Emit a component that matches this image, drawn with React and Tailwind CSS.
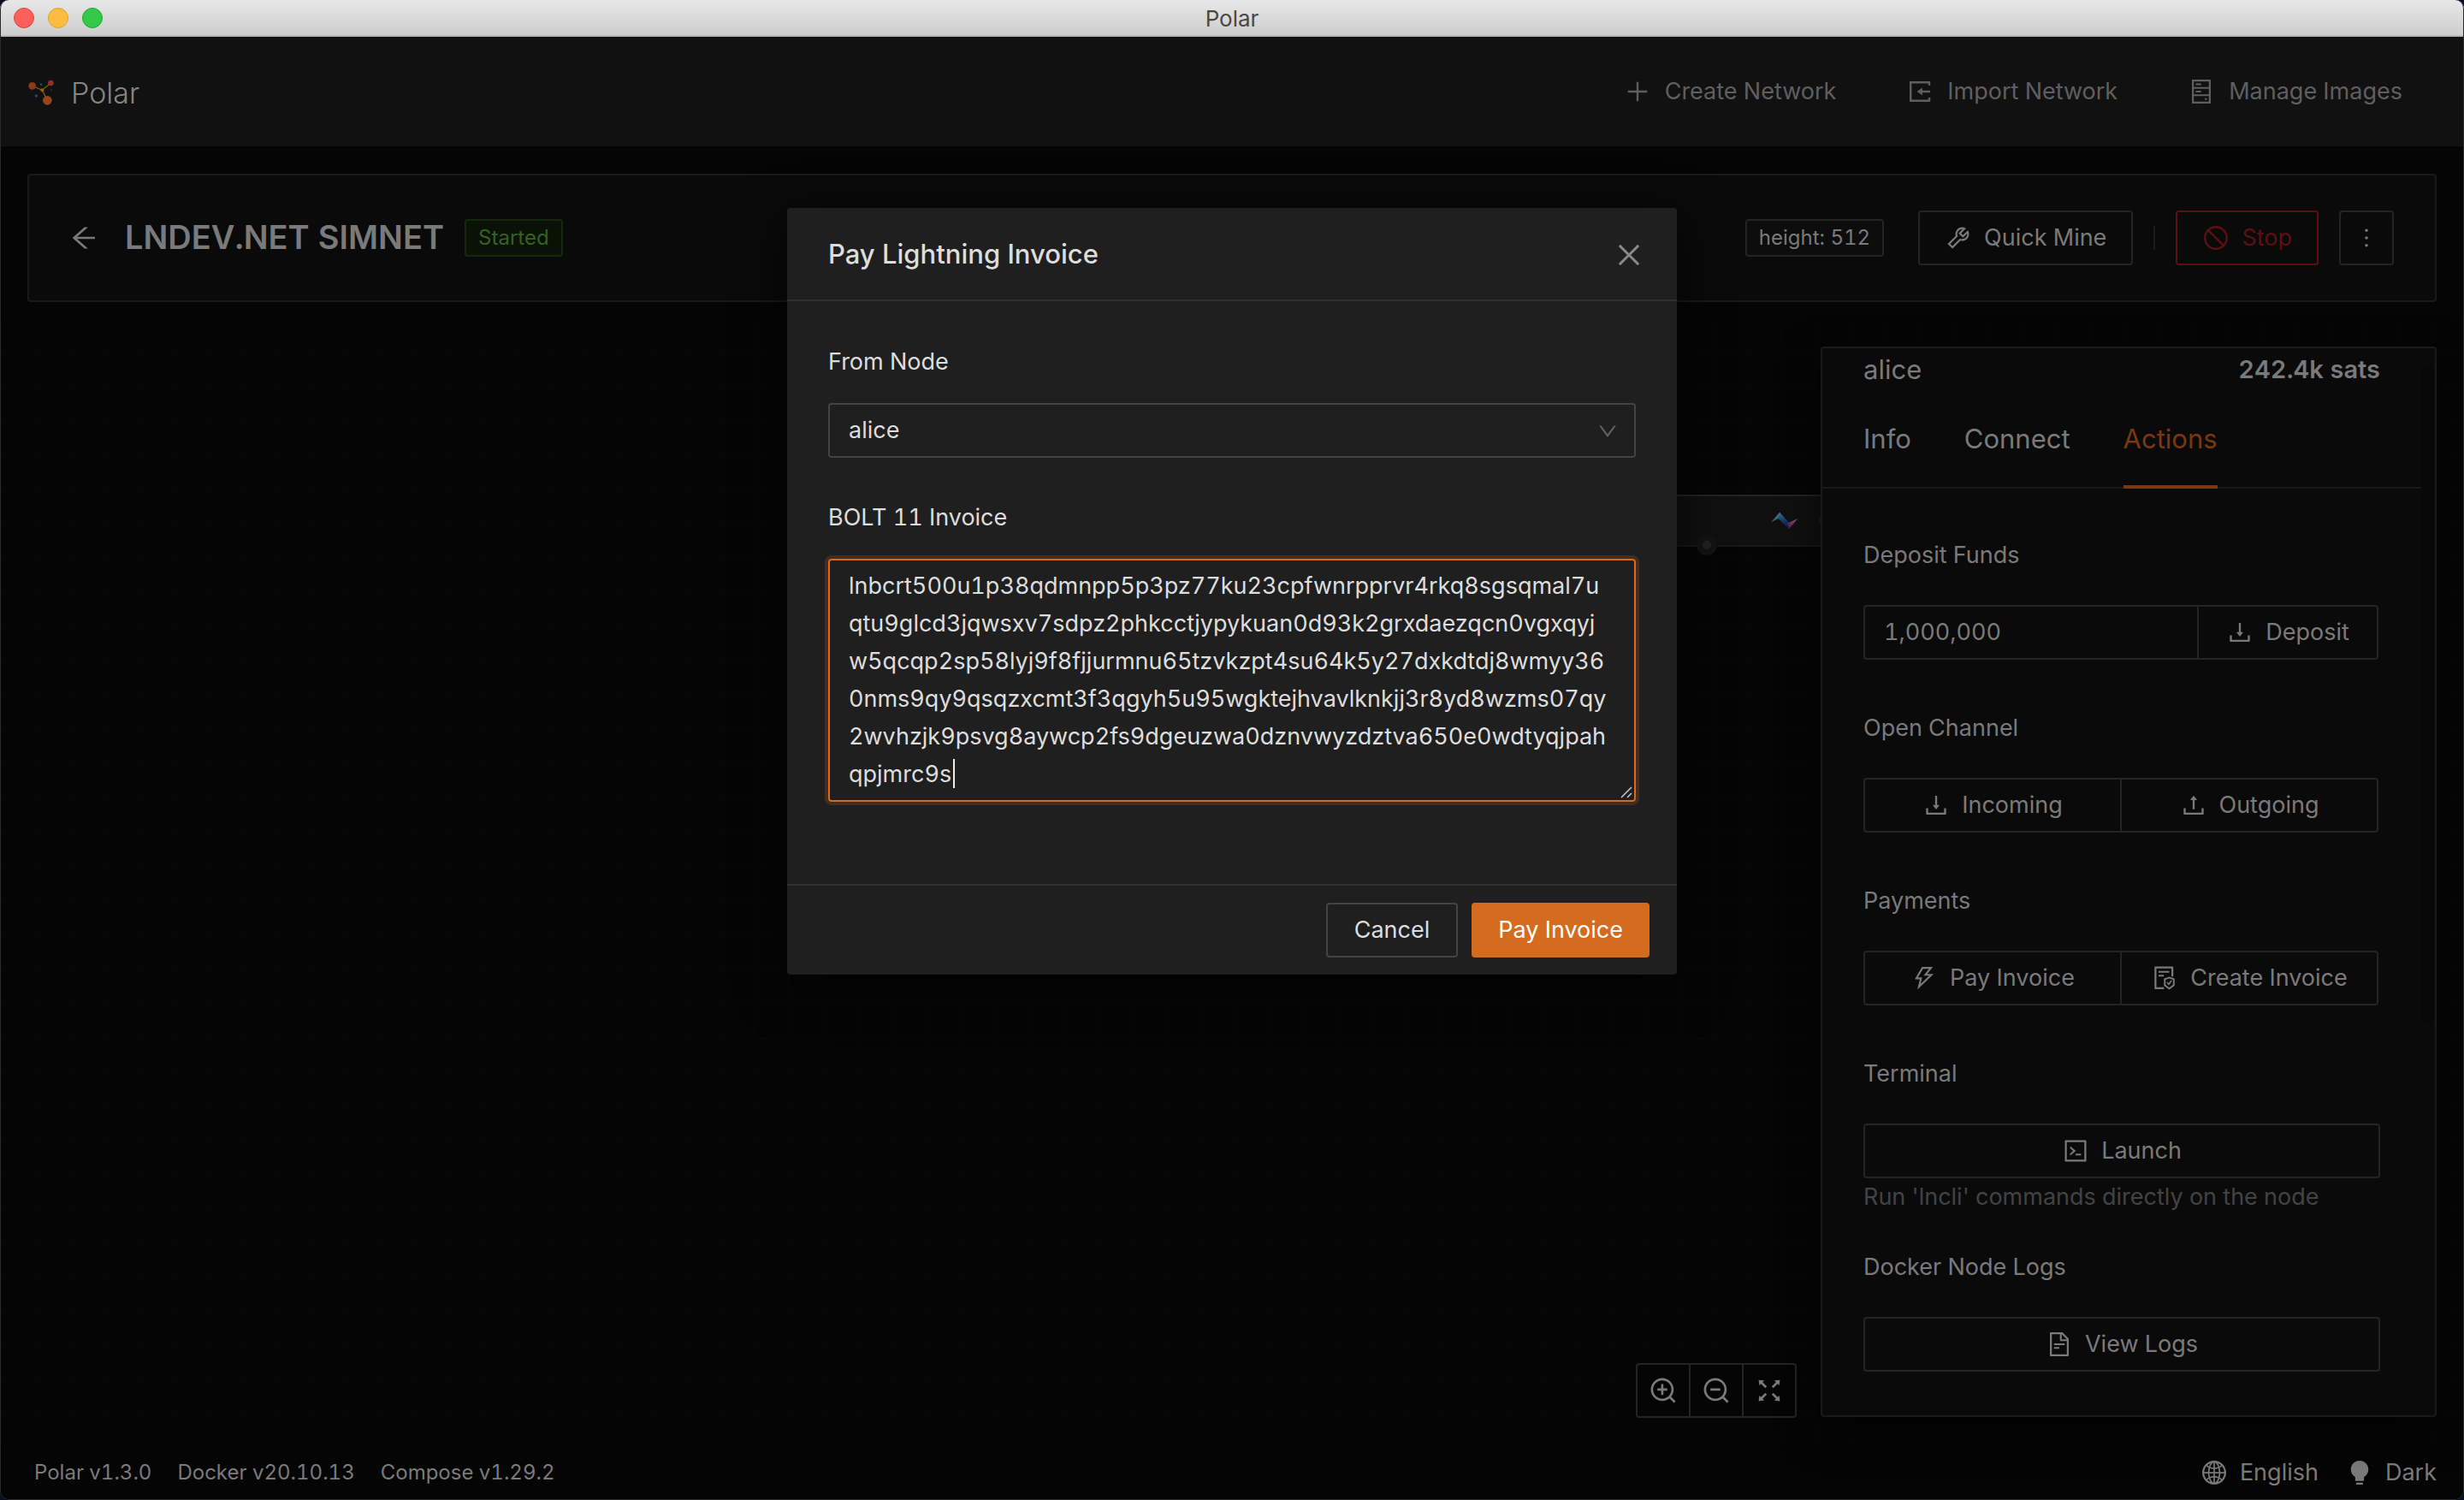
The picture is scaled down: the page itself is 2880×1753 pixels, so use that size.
import {
  AiOutlinePlus, AiOutlineHdd, AiOutlineTool, AiOutlineStop, AiOutlineMore,
  AiOutlineArrowLeft, AiOutlineClose, AiOutlineDown, AiOutlineDownload, AiOutlineUpload,
  AiOutlineThunderbolt, AiOutlineFileProtect, AiOutlineCode, AiOutlineFileText,
  AiOutlineZoomIn, AiOutlineZoomOut, AiOutlineFullscreen, AiOutlineGlobal, AiFillBulb,
} from "react-icons/ai";

const INVOICE = [
  "lnbcrt500u1p38qdmnpp5p3pz77ku23cpfwnrpprvr4rkq8sgsqmal7u",
  "qtu9glcd3jqwsxv7sdpz2phkcctjypykuan0d93k2grxdaezqcn0vgxqyj",
  "w5qcqp2sp58lyj9f8fjjurmnu65tzvkzpt4su64k5y27dxkdtdj8wmyy36",
  "0nms9qy9qsqzxcmt3f3qgyh5u95wgktejhvavlknkjj3r8yd8wzms07qy",
  "2wvhzjk9psvg8aywcp2fs9dgeuzwa0dznvwyzdztva650e0wdtyqjpah",
  "qpjmrc9s",
].join("\n");

const box = "flex h-16 items-center justify-center gap-3.5 rounded border-2 border-[#242424]";

function TitleBar() {
  return (
    <div className="relative flex h-[43px] items-center justify-center border-b-2 border-[#b4b6b4] bg-linear-to-b from-[#e8e8e8] to-[#cdcdcd]">
      <div className="absolute left-4 flex gap-4">
        <span className="size-6 rounded-full border border-[#e0443e] bg-[#fc605c]" />
        <span className="size-6 rounded-full border border-[#dea123] bg-[#fdbc40]" />
        <span className="size-6 rounded-full border border-[#1aab29] bg-[#34c84a]" />
      </div>
      <span className="pt-0.5 text-[26px] text-[#484848]">Polar</span>
    </div>
  );
}

function Logo() {
  return (
    <svg viewBox="98 74 90 90" className="size-[30px]" aria-hidden="true">
      <path d="M112 96 147 111 177 86M147 111 165 147" stroke="#7d5a12" strokeWidth="4" fill="none" />
      <circle cx="147" cy="111" r="6" fill="#8a6a14" />
      <circle cx="112" cy="96" r="13" fill="#8c3a1e" />
      <circle cx="177" cy="86" r="10" fill="#8c3320" />
      <circle cx="165" cy="147" r="16" fill="#96451c" />
      <circle cx="126" cy="131" r="5.500" fill="#1f4478" />
      <circle cx="143" cy="91" r="4" fill="#1f4478" />
      <circle cx="178" cy="111" r="3" fill="#1b3560" />
    </svg>
  );
}

function ImportIcon({ className }) {
  return (
    <svg viewBox="0 0 32 32" className={className} fill="none" stroke="currentColor" strokeWidth="2.400" aria-hidden="true">
      <path d="M27 9V5.200H5.200V26.800H27V23M28 16H17" />
      <path d="M19 11.500V20.500L12.500 16Z" fill="currentColor" stroke="none" />
    </svg>
  );
}

function NavItem({ icon: Icon, children }) {
  return (
    <button className="flex items-center gap-4 text-[27px]">
      <Icon className="size-8" />
      {children}
    </button>
  );
}

function Header() {
  return (
    <header className="flex h-32 items-center justify-between bg-[#111111] pl-[33px] pr-[72px] text-[#5f5f5f]">
      <a href="#home" className="flex items-center gap-5 pt-0.5 text-[34px] font-light text-[#858585]">
        <Logo />
        Polar
      </a>
      <nav className="flex gap-[82px]">
        <NavItem icon={AiOutlinePlus}>Create Network</NavItem>
        <NavItem icon={ImportIcon}>Import Network</NavItem>
        <NavItem icon={AiOutlineHdd}>Manage Images</NavItem>
      </nav>
    </header>
  );
}

function NetworkBar() {
  return (
    <section className="mx-8 mt-8 flex h-[150px] items-center rounded border-2 border-[#1a1a1a] bg-[#0a0a0a] pl-[46px] pr-12">
      <button aria-label="Back" className="mr-[30px]"><AiOutlineArrowLeft className="size-9" /></button>
      <h1 className="pb-0.5 text-[38px] font-semibold">LNDEV.NET SIMNET</h1>
      <span className="ml-6 rounded border-2 border-[#16290f] bg-[#0a1208] px-[14px] py-0.5 text-2xl leading-9 text-[#356220]">Started</span>
      <div className="ml-auto flex items-center">
        <span className="rounded border-2 border-[#242424] bg-[#0d0d0d] px-[14px] py-0.5 text-2xl leading-9">height: 512</span>
        <button className={`${box} ml-10 px-[29px] text-[27px]`}><AiOutlineTool className="size-8" />Quick Mine</button>
        <span className="mx-6 h-7 w-[2px] bg-[#1c1c1c]" />
        <button className="flex h-16 items-center gap-3.5 rounded border-2 border-[#5c1012] px-[29px] text-[27px] text-[#5c1012]"><AiOutlineStop className="size-8" />Stop</button>
        <button aria-label="More" className={`${box} ml-6 w-16`}><AiOutlineMore className="size-8" /></button>
      </div>
    </section>
  );
}

function CanvasNode() {
  return (
    <div className="absolute right-[752px] top-[201px] h-[61px] w-[240px] border-y-2 border-b-[#181818] border-t-[#242424] bg-[#101010]">
      <svg viewBox="358 113 99 64" className="absolute right-[26px] top-[18px] h-[21px] w-[33px]" aria-hidden="true">
        <defs>
          <linearGradient id="wing" x1="0" y1="0" x2="0" y2="1">
            <stop offset="0" stopColor="#4a7890" />
            <stop offset="1" stopColor="#2a5f70" />
          </linearGradient>
          <linearGradient id="ribbon" x1="0" y1="0" x2="0" y2="1">
            <stop offset="0" stopColor="#3d7296" />
            <stop offset="0.500" stopColor="#163a66" />
            <stop offset="1" stopColor="#10103c" />
          </linearGradient>
          <linearGradient id="tail" x1="0" y1="1" x2="1" y2="0">
            <stop offset="0" stopColor="#4c104c" />
            <stop offset="1" stopColor="#8a6680" />
          </linearGradient>
        </defs>
        <path d="M360 151 391 115 398 134 386 137Z" fill="url(#wing)" />
        <path d="M391 115 424 152V175L386 137Z" fill="url(#ribbon)" />
        <path d="M420 153 455 138 424 175Z" fill="url(#tail)" />
      </svg>
      <span className="absolute -right-2 top-[23px] size-[10px] rounded-full bg-[#1d1d1d]" />
      <span className="absolute -bottom-3 right-[121px] flex size-6 items-center justify-center rounded-full bg-[#131313]">
        <span className="size-[10px] rounded-full bg-[#222222]" />
      </span>
    </div>
  );
}

function Field({ label, children, className = "mt-[58px]" }) {
  return (
    <div className={className}>
      <h3 className="mb-9 text-[27px] leading-[44px]">{label}</h3>
      {children}
    </div>
  );
}

function Pair({ left: L, leftText, right: R, rightText }) {
  return (
    <div className="mr-[2px] flex h-16 rounded border-2 border-[#242424] text-[27px]">
      <button className="flex flex-1 items-center justify-center gap-3.5 border-r-2 border-[#242424]"><L className="size-8" />{leftText}</button>
      <button className="flex flex-1 items-center justify-center gap-3.5"><R className="size-8" />{rightText}</button>
    </div>
  );
}

function Sidebar() {
  return (
    <aside className="relative w-[720px] rounded border-2 border-[#1a1a1a] bg-[#0a0a0a] pb-[51px] shadow-[0_16px_48px_rgba(0,0,0,0.6)]">
      <div className="absolute right-0 top-5 h-[770px] w-4 rounded-full bg-[#080808]" />
      <div className="flex h-[50px] items-center justify-between pl-12 pr-16">
        <h2 className="text-[31px]">alice</h2>
        <strong className="text-[29px] font-semibold">242.4k sats</strong>
      </div>
      <div role="tablist" className="mr-4 flex h-[114px] gap-[62px] border-b-2 border-[#181818] pl-12 text-[31px]">
        <button role="tab" className="h-[114px] pb-0.5">Info</button>
        <button role="tab" className="h-[114px] pb-0.5">Connect</button>
        <button role="tab" aria-selected="true" className="h-[114px] border-b-4 border-[#79390f] pt-0.5 text-[#79390f]">Actions</button>
      </div>
      <div className="pl-12 pr-16">
        <Field label="Deposit Funds" className="mt-14">
          <div className="mr-[2px] flex h-16 rounded border-2 border-[#242424] text-[27px]">
            <input aria-label="Deposit amount" defaultValue="1,000,000" className="min-w-0 flex-1 bg-transparent px-[22px] outline-none" />
            <button className="flex w-[210px] items-center justify-center gap-3.5 border-l-2 border-[#242424]"><AiOutlineDownload className="size-8" />Deposit</button>
          </div>
        </Field>
        <Field label="Open Channel">
          <Pair left={AiOutlineDownload} leftText="Incoming" right={AiOutlineUpload} rightText="Outgoing" />
        </Field>
        <Field label="Payments">
          <Pair left={AiOutlineThunderbolt} leftText="Pay Invoice" right={AiOutlineFileProtect} rightText="Create Invoice" />
        </Field>
        <Field label="Terminal">
          <button className={`${box} w-full text-[27px]`}><AiOutlineCode className="size-8" />Launch</button>
          <p className="text-[27px] leading-[44px] text-[#434343]">Run 'lncli' commands directly on the node</p>
        </Field>
        <Field label="Docker Node Logs" className="mt-[38px]">
          <button className={`${box} w-full text-[27px]`}><AiOutlineFileText className="size-8" />View Logs</button>
        </Field>
      </div>
    </aside>
  );
}

function Designer() {
  return (
    <main className="relative mt-6 flex h-[1312px] items-start justify-end bg-[linear-gradient(to_right,#080808_1px,transparent_1px),linear-gradient(to_bottom,#080808_1px,transparent_1px)] bg-size-[40px_40px] bg-position-[1px_36px] px-8 pt-7">
      <CanvasNode />
      <div className="mb-8 mr-7 flex h-16 divide-x-2 divide-[#242424] self-end rounded border-2 border-[#242424] bg-[#050505]">
        <button aria-label="Zoom in" className="flex w-[62px] items-center justify-center"><AiOutlineZoomIn className="size-9" /></button>
        <button aria-label="Zoom out" className="flex w-[62px] items-center justify-center"><AiOutlineZoomOut className="size-9" /></button>
        <button aria-label="Fit to screen" className="flex w-[60px] items-center justify-center"><AiOutlineFullscreen className="size-9" /></button>
      </div>
      <Sidebar />
    </main>
  );
}

function Footer() {
  return (
    <footer className="flex h-16 items-center justify-between pl-10 pr-8 text-2xl">
      <div className="flex gap-[30px]">
        <span>Polar v1.3.0</span>
        <span>Docker v20.10.13</span>
        <span>Compose v1.29.2</span>
      </div>
      <div className="flex gap-8 text-[27px]">
        <button className="flex items-center gap-3.5"><AiOutlineGlobal className="size-8" />English</button>
        <button className="flex items-center gap-3.5"><AiFillBulb className="size-8" />Dark</button>
      </div>
    </footer>
  );
}

function PayInvoiceModal() {
  return (
    <div role="dialog" aria-labelledby="modal-title" className="absolute left-1/2 top-[243px] w-[1040px] -translate-x-1/2 rounded bg-[#1f1f1f] text-[27px] text-[#dddddd] shadow-[0_12px_60px_rgba(0,0,0,0.7)]">
      <div className="flex h-[109px] items-center justify-between border-b-2 border-[#303030] pl-12 pr-[38px] pt-0.5">
        <h2 id="modal-title" className="text-[31px] font-medium">Pay Lightning Invoice</h2>
        <button aria-label="Close" className="text-[#8a8a8a]"><AiOutlineClose className="size-9" /></button>
      </div>
      <form className="px-12 pb-24 pt-[49px]">
        <label htmlFor="from" className="block leading-[44px]">From Node</label>
        <div className="relative mt-[26px]">
          <select id="from" className="h-16 w-full appearance-none rounded border-2 border-[#434343] bg-transparent px-[22px] outline-none">
            <option>alice</option>
          </select>
          <AiOutlineDown className="pointer-events-none absolute right-5 top-5 size-[26px] text-[#636363]" />
        </div>
        <label htmlFor="invoice" className="mt-12 block leading-[44px]">BOLT 11 Invoice</label>
        <div className="relative mt-[26px]">
          <textarea
            id="invoice"
            defaultValue={INVOICE}
            spellCheck={false}
            className="block h-[284px] w-full resize-none whitespace-pre rounded border-2 border-[#d46b1e] bg-transparent px-[22px] py-2 leading-[44px] shadow-[0_0_0_4px_#452d1d] outline-none"
          />
          <span className="absolute left-[146px] top-[234px] h-[34px] w-0.5 bg-[#eeeeee]" />
          <svg viewBox="0 0 14 14" className="absolute bottom-1 right-1 size-[14px]" stroke="#c8c8c8" strokeWidth="1.500" aria-hidden="true">
            <path d="M1 13 13 1M8 13 13 8" />
          </svg>
        </div>
      </form>
      <div className="flex justify-end gap-4 border-t-2 border-[#303030] px-8 py-5">
        <button className="h-16 rounded border-2 border-[#434343] px-[31px]">Cancel</button>
        <button className="h-16 rounded bg-[#d46b1e] px-[31px] text-white">Pay Invoice</button>
      </div>
    </div>
  );
}

export default function App() {
  return (
    <div className="min-h-screen bg-[#0b0b26]">
      <div className="relative min-h-screen overflow-hidden rounded-[10px] bg-[#050505] font-['Inter',sans-serif] tabular-nums text-[#7a7a7a]">
        <TitleBar />
        <Header />
        <NetworkBar />
        <Designer />
        <Footer />
        <PayInvoiceModal />
        <div className="pointer-events-none absolute inset-0 rounded-[10px] border border-t-0 border-[#2a2a2a]" />
      </div>
    </div>
  );
}
